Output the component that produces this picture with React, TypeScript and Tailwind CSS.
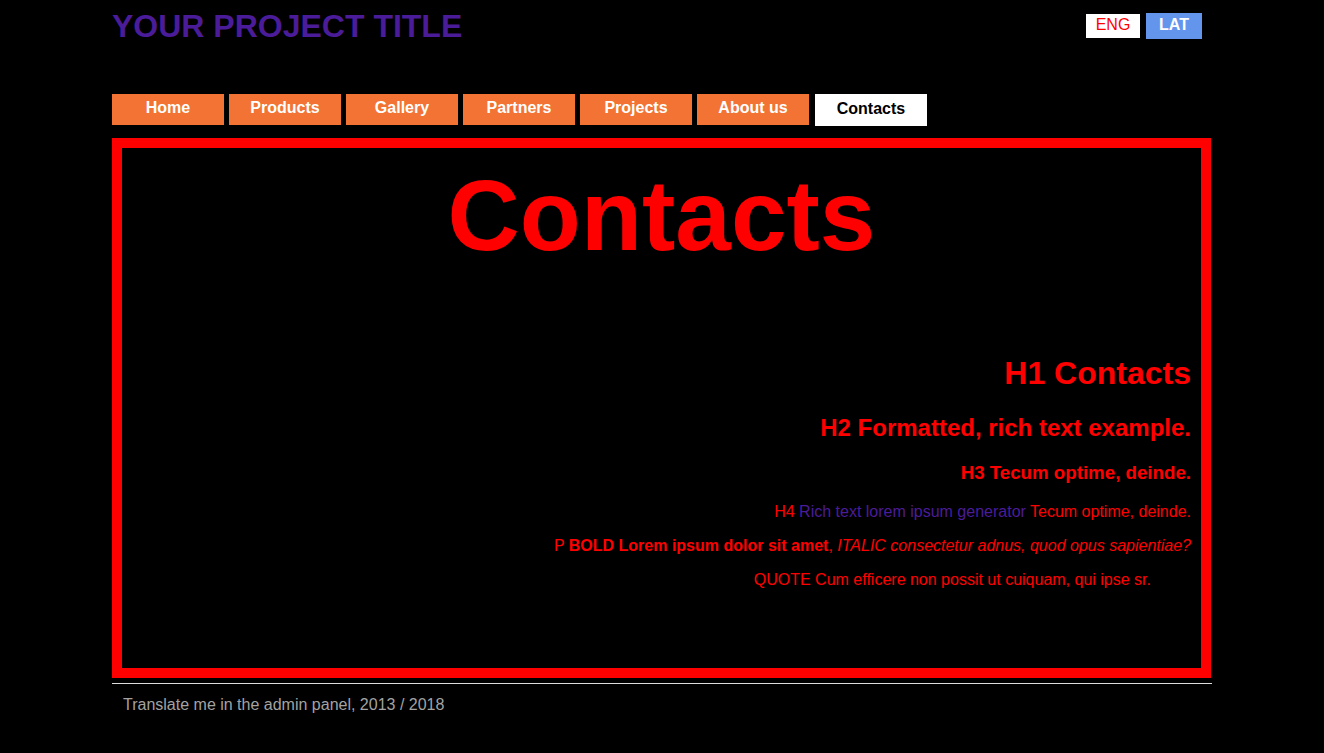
import React from "react";

const navItems = ["Home", "Products", "Gallery", "Partners", "Projects", "About us"];

export default function App() {
  return (
    <div className="min-h-screen bg-black font-['Liberation_Sans',Arial,sans-serif] text-[16px] leading-[normal]">
      <div className="w-[1100px] mx-auto">
        {/* Header */}
        <div className="flex justify-between items-start h-[94px]">
          <h1 className="mt-[7.5px] text-[32px] font-bold leading-[normal] text-[#4b1c9a]">
            YOUR PROJECT TITLE
          </h1>
          <div className="flex items-start gap-[6px] mr-[10px] mt-[13px]">
            <a className="mt-px w-[54px] h-[24px] bg-white text-[#ff0000] text-center leading-[normal] pt-[2px]">
              ENG
            </a>
            <a className="w-[56px] h-[26px] bg-[#6495ed] text-white font-bold text-center leading-[normal] pt-[3px]">
              LAT
            </a>
          </div>
        </div>

        {/* Nav */}
        <nav className="flex gap-[5px] h-[31px]">
          {navItems.map((item) => (
            <a
              key={item}
              className="w-[112px] h-[31px] bg-[#f27333] text-white font-bold text-center pt-[4.5px] leading-[normal]"
            >
              {item}
            </a>
          ))}
          <a className="ml-px w-[112px] h-[32px] bg-white text-black font-bold text-center pt-[5.5px] leading-[normal]">
            Contacts
          </a>
        </nav>

        {/* Content box */}
        <div className="mt-[13px] w-[1099px] h-[540px] border-[10px] border-[#ff0000] flex flex-col text-[#ff0000]">
          <h1 className="mt-[10px] text-[100px] font-bold text-center leading-[normal]">Contacts</h1>
          <div className="text-right pr-[10px]">
            <h1 className="mt-[81.5px] text-[32px] font-bold leading-[normal]">H1 Contacts</h1>
            <h2 className="mt-[22.2px] text-[24px] font-bold leading-[normal]">
              H2 Formatted, rich text example.
            </h2>
            <h3 className="mt-[20px] text-[18.72px] font-bold leading-[normal]">
              H3 Tecum optime, deinde.
            </h3>
            <h4 className="mt-[19.6px] text-[16px] leading-[normal]">
              H4 <a className="text-[#4b1c9a]">Rich text lorem ipsum generator</a> Tecum optime, deinde.
            </h4>
            <p className="mt-[15.6px] leading-[normal]">
              P <strong className="font-bold">BOLD Lorem ipsum dolor sit amet</strong>,{" "}
              <em className="italic">ITALIC consectetur adnus, quod opus sapientiae?</em>
            </p>
            <blockquote className="mt-[16.4px] mr-[40px] leading-[normal]">
              QUOTE Cum efficere non possit ut cuiquam, qui ipse sr.
            </blockquote>
          </div>
        </div>

        {/* Footer */}
        <div className="mt-[5px] h-px bg-[#dddddd]" />
        <div className="mt-[12px] pl-[11px] text-[#a3a3a3] leading-[normal]">
          Translate me in the admin panel, 2013 / 2018
        </div>
      </div>
    </div>
  );
}
